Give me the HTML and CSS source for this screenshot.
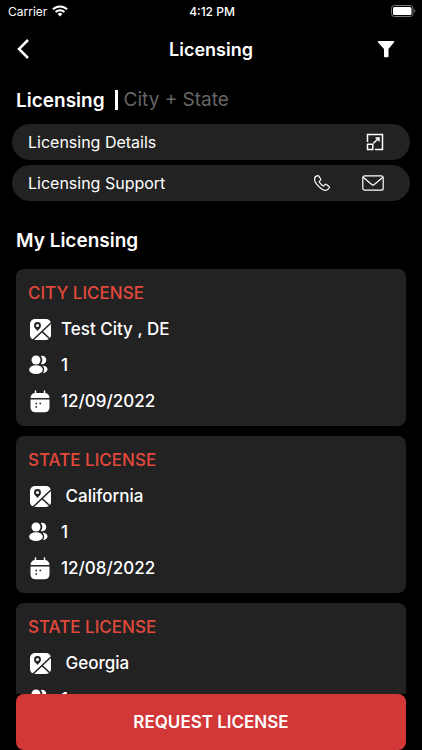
FILE: index.html
```
<!DOCTYPE html>
<html lang="en">
<head>
  <meta charset="UTF-8">
  <meta name="viewport" content="width=device-width, initial-scale=1">
  <title>Licensing</title>
  <link rel="stylesheet" href="styles.css">
</head>
<body>

<!-- Shared icons for the license cards -->
<svg class="sprite" aria-hidden="true">
  <symbol id="icon-map" viewBox="0 0 24 24">
    <rect x="2" y="2" width="21" height="21" rx="5" fill="#fff"/>
    <circle cx="9.500" cy="8.500" r="2.500" fill="#fff" stroke="#222" stroke-width="1.900"/>
    <path d="M7 11 9.500 14 12 11z" fill="#222"/>
    <path d="M5 23 23 6M14 14.500 22 22" fill="none" stroke="#222" stroke-width="1.600"/>
  </symbol>
  <symbol id="icon-people" viewBox="0 0 24 24">
    <circle cx="8" cy="7" r="4.500" fill="#fff"/>
    <ellipse cx="8" cy="16.700" rx="6.900" ry="4.400" fill="#fff"/>
    <path d="M12.800 3a4.200 4.200 0 1 1 0 8 6.500 6.500 0 0 0 0-8z" fill="#fff"/>
    <path d="M14.500 12.500c3 .2 5 1.700 5 3.700s-1.800 3.600-4.500 3.800c1.800-2.300 1.600-5.400-.5-7.500z" fill="#fff"/>
  </symbol>
  <symbol id="icon-calendar" viewBox="0 0 24 24">
    <path d="M7.500 2v4M16.500 2v4" stroke="#fff" stroke-width="1.500" stroke-linecap="round"/>
    <path d="M2.500 9c.2-3.300 2-5 5-5h9c3 0 4.800 1.700 5 5z" fill="#fff"/>
    <path d="M2.500 10.500h19V18c0 3.500-1.800 5.200-5 5.200h-9c-3.200 0-5-1.700-5-5.200z" fill="#fff"/>
    <path d="M7.500 14.500h1.600M11.500 14.500h1.600M7.500 18h1.600" stroke="#222" stroke-width="1.600"/>
  </symbol>
</svg>

<div class="status-bar">
  <div class="carrier">
    <span>Carrier</span>
    <svg width="16" height="12" viewBox="0 0 16 12" fill="none" stroke="#fff" stroke-width="2">
      <path d="M1 4.300a10 10 0 0 1 14 0M3.600 7a6.300 6.300 0 0 1 8.800 0"/>
      <path d="M5.600 9a3.500 3.500 0 0 1 4.800 0L8 11.500z" fill="#fff" stroke="none"/>
    </svg>
  </div>
  <span class="time">4:12 PM</span>
  <div class="battery">
    <svg width="25" height="12" viewBox="0 0 25 12">
      <rect x=".5" y=".5" width="21.500" height="11" rx="3" fill="none" stroke="#777"/>
      <rect x="2" y="2" width="18.500" height="8" rx="1.500" fill="#fff"/>
      <path d="M23.300 4.200a2 2 0 0 1 0 3.600z" fill="#777"/>
    </svg>
  </div>
</div>

<header class="nav">
  <button class="icon-btn" aria-label="Back">
    <svg width="14" height="22" viewBox="0 0 14 22" fill="none" stroke="#fff" stroke-width="2.500">
      <path d="M12 2 3 11l9 9"/>
    </svg>
  </button>
  <h1>Licensing</h1>
  <button class="icon-btn" aria-label="Filter">
    <svg width="18" height="18" viewBox="0 0 18 18" fill="#fff">
      <path d="M1.500 1h15a.8.800 0 0 1 .6 1.300L11.500 9v7.500a.8.800 0 0 1-.8.800H7.800a.8.800 0 0 1-.8-.8V9L.9 2.300A.8.800 0 0 1 1.500 1z"/>
    </svg>
  </button>
</header>

<main>
  <div class="section-title">
    <h2>Licensing</h2>
    <span class="subtitle">City + State</span>
  </div>

  <div class="links">
    <div class="link-row">
      <span>Licensing Details</span>
      <button class="icon-btn" aria-label="Open licensing details">
        <svg width="18" height="18" viewBox="0 0 18 18" fill="none" stroke="#fff" stroke-width="1.500">
          <path d="M1.500 9V1.500h15v15H9"/>
          <path d="M1.500 11.200h5.300v5.300H1.500zM7.500 10.200l5-5M9.500 5h3.500v3.500"/>
        </svg>
      </button>
    </div>
    <div class="link-row">
      <span>Licensing Support</span>
      <a class="icon-btn" href="#" aria-label="Call support">
        <svg width="16" height="16" viewBox="0 0 16 16" fill="none" stroke="#fff" stroke-width="1.200" stroke-linejoin="round">
          <path d="M3.700.7C2.500.9.600 2.200.600 4.200c0 2.300 2 5.300 4.300 7.400 2.300 2.300 4.800 3.800 6.800 3.800 1.800 0 3-1.500 3.600-2.600.2-.5 0-1-.4-1.400L12.400 9.500c-.5-.4-1-.3-1.400.1l-1 1c-.3.3-.8.4-1.200.1-1.300-.8-2.500-2-3.400-3.400-.2-.4-.1-.9.200-1.200l.8-.8c.4-.4.400-1 .1-1.500L4.800 1.100C4.500.7 4.200.600 3.700.7z"/>
        </svg>
      </a>
      <a class="icon-btn" href="#" aria-label="Email support">
        <svg width="22" height="16" viewBox="0 0 22 16" fill="none" stroke="#fff" stroke-width="1.200">
          <rect x=".8" y=".8" width="20.400" height="14.400" rx="2"/>
          <path d="M1.200 2.300l8.500 7.200c.8.700 1.800.7 2.600 0l8.500-7.200"/>
        </svg>
      </a>
    </div>
  </div>

  <h2 class="list-title">My Licensing</h2>

  <div class="cards">
    <article class="card">
      <h3>CITY LICENSE</h3>
      <p><svg><use href="#icon-map"/></svg>Test City , DE</p>
      <p><svg><use href="#icon-people"/></svg>1</p>
      <p><svg><use href="#icon-calendar"/></svg>12/09/2022</p>
    </article>
    <article class="card">
      <h3>STATE LICENSE</h3>
      <p><svg><use href="#icon-map"/></svg>&nbsp;California</p>
      <p><svg><use href="#icon-people"/></svg>1</p>
      <p><svg><use href="#icon-calendar"/></svg>12/08/2022</p>
    </article>
    <article class="card">
      <h3>STATE LICENSE</h3>
      <p><svg><use href="#icon-map"/></svg>&nbsp;Georgia</p>
      <p><svg><use href="#icon-people"/></svg>1</p>
    </article>
  </div>
</main>

<button class="request-btn">REQUEST LICENSE</button>

</body>
</html>
```
FILE: styles.css
```
* {
  box-sizing: border-box;
}

body {
  margin: 0;
  height: 100vh;
  display: flex;
  flex-direction: column;
  background: #000;
  color: #fff;
  font-family: Inter, 'Liberation Sans', sans-serif;
  font-size: 17px;
  overflow: hidden;
}

h1,
h2,
h3,
p {
  margin: 0;
}

.sprite {
  display: none;
}

.icon-btn {
  display: flex;
  padding: 0;
  border: none;
  background: none;
  color: inherit;
  cursor: pointer;
}

/* Status bar */
.status-bar {
  display: grid;
  grid-template-columns: 1fr auto 1fr;
  align-items: center;
  height: 22px;
  padding: 0 6px 0 8px;
  font-size: 12px;
}

.carrier {
  display: flex;
  align-items: center;
  gap: 5px;
}

.time {
  font-weight: 500;
}

.battery {
  display: flex;
  justify-content: flex-end;
}

/* Header */
.nav {
  display: grid;
  grid-template-columns: 40px 1fr 40px;
  align-items: center;
  height: 54px;
  padding: 0 16px;
}

h1 {
  font-size: 18px;
  font-weight: 600;
  text-align: center;
}

.nav .icon-btn:last-child {
  justify-content: center;
}

/* Content */
main {
  flex: 1;
  min-height: 0;
  overflow: hidden;
}

.section-title {
  display: flex;
  align-items: center;
  gap: 10px;
  height: 48px;
  padding: 0 16px;
}

h2 {
  font-size: 19px;
  font-weight: 600;
}

.subtitle {
  padding-left: 6px;
  border-left: 3px solid #fff;
  color: #666;
  font-size: 19px;
  line-height: 20px;
}

.links {
  display: flex;
  flex-direction: column;
  gap: 5px;
  padding: 0 12px;
}

.link-row {
  display: flex;
  align-items: center;
  gap: 32px;
  height: 36px;
  padding: 0 26px 0 16px;
  border-radius: 18px;
  background: #222;
  font-size: 16px;
}

.link-row span {
  flex: 1;
}

.list-title {
  padding: 12px 16px 0;
  line-height: 56px;
}

.cards {
  display: flex;
  flex-direction: column;
  gap: 10px;
  padding: 0 16px;
}

.card {
  padding: 6px 12px 7px;
  border-radius: 8px;
  background: #222;
}

.card h3 {
  color: #e2493b;
  font-size: 17px;
  font-weight: 500;
  line-height: 36px;
}

.card p {
  display: flex;
  align-items: center;
  gap: 9px;
  height: 36px;
  font-weight: 500;
}

.card svg {
  width: 24px;
  height: 24px;
}

.request-btn {
  height: 56px;
  margin: 0 16px;
  border: none;
  border-radius: 8px;
  background: #d23838;
  color: #fff;
  font-family: inherit;
  font-size: 17px;
  font-weight: 600;
  cursor: pointer;
}
```
